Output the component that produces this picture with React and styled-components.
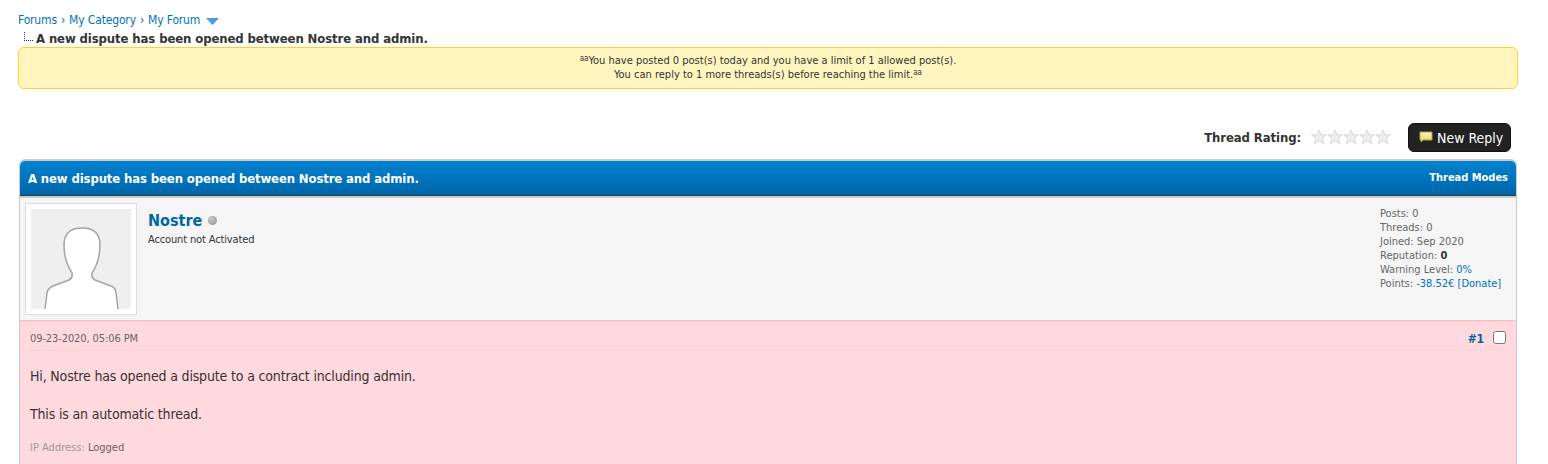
import React from "react";
import styled, { createGlobalStyle } from "styled-components";

const GlobalStyle = createGlobalStyle`
  html, body {
    margin: 0;
    height: 464px;
    overflow: hidden;
    background: #fff;
    font-family: "DejaVu Sans", sans-serif;
    font-stretch: condensed;
    color: #333;
  }
`;

const Page = styled.div`
  padding: 13px 30px 0 18px;
`;

const Breadcrumb = styled.div`
  display: flex;
  align-items: center;
  height: 14px;
  font-size: 12px;
  letter-spacing: -0.15px;
  color: #0f5c9e;
  gap: 4px;
  a {
    color: #0072bc;
  }
  svg {
    margin-left: 2px;
    margin-top: 2px;
  }
`;

const ThreadTitle = styled.div`
  display: flex;
  align-items: flex-end;
  height: 17px;
  margin-top: 2px;
  padding-left: 6px;
  font-size: 13px;
  font-weight: 700;
  letter-spacing: -0.11px;
  color: #333;
  gap: 3px;
  line-height: 14px;
`;

const Tree = styled.span`
  width: 9px;
  height: 9px;
  margin-bottom: 5px;
  border-left: 1px dotted #333;
  border-bottom: 1px dotted #333;
  box-sizing: border-box;
`;

const Notice = styled.div`
  height: 42px;
  margin-top: 1px;
  box-sizing: border-box;
  border: 1px solid #ffd324;
  border-radius: 6px;
  background: #fff6bf;
  padding-top: 6px;
  text-align: center;
  font-size: 11px;
  line-height: 14px;
  color: #333;
`;

const Ordinal = styled.span`
  font-size: 8px;
  line-height: 1;
  vertical-align: 3px;
`;

const RatingRow = styled.div`
  display: flex;
  justify-content: flex-end;
  align-items: center;
  height: 30px;
  margin-top: 33px;
  padding-right: 7px;
`;

const RatingLabel = styled.span`
  font-size: 13px;
  font-weight: 700;
  letter-spacing: -0.1px;
  margin-right: 10px;
`;

const Stars = styled.div`
  display: flex;
  margin-right: 17px;
  svg {
    display: block;
  }
`;

const ReplyButton = styled.button`
  display: flex;
  align-items: center;
  gap: 4px;
  height: 29px;
  width: 103px;
  box-sizing: border-box;
  padding: 2px 0 0 10px;
  border: 1px solid #111;
  border-radius: 6px;
  background: #222;
  color: #fff;
  font: condensed 14px "DejaVu Sans", sans-serif;
  svg {
    margin-top: -3px;
  }
`;

const Thread = styled.div`
  margin: 7px 1px 0;
  border: 1px solid #ccc;
  border-top-width: 2px;
  border-bottom: 0;
  border-radius: 6px 6px 0 0;
`;

const ThreadHead = styled.div`
  display: flex;
  justify-content: space-between;
  height: 35px;
  box-sizing: border-box;
  padding: 10px 8px 0 8px;
  border-radius: 5px 5px 0 0;
  border-bottom: 1px solid #263c30;
  background: linear-gradient(#0082d0, #0066aa);
  color: #fff;
  font-weight: 700;
  font-size: 13px;
  letter-spacing: -0.13px;
  line-height: 16px;
`;

const HeadLink = styled.span`
  font-size: 11px;
  letter-spacing: -0.02px;
  line-height: 13px;
`;

const AuthorRow = styled.div`
  display: flex;
  height: 124px;
  box-sizing: border-box;
  padding: 5px 16px 0 5px;
  background: #f5f5f5;
  border-top: 2px solid #ccc;
`;

const AvatarFrame = styled.div`
  width: 112px;
  height: 112px;
  box-sizing: border-box;
  padding: 5px;
  background: #fff;
  border: 1px solid #ddd;
  margin-right: 11px;
  svg {
    display: block;
  }
`;

const AuthorInfo = styled.div`
  flex: 1;
  padding-top: 7px;
`;

const NameLine = styled.div`
  display: flex;
  align-items: center;
  gap: 6px;
  height: 20px;
  font-size: 16px;
  font-weight: 700;
  color: #0066a2;
`;

const StatusDot = styled.span`
  width: 9px;
  height: 9px;
  border-radius: 50%;
  background: radial-gradient(circle at 40% 35%, #c8c8c8, #8f8f8f);
`;

const UserTitle = styled.div`
  font-size: 11px;
  letter-spacing: -0.14px;
  line-height: 14px;
  margin-top: 3px;
`;

const Stats = styled.div`
  width: 120px;
  padding-top: 4px;
  font-size: 11px;
  line-height: 14px;
  color: #666;
  white-space: nowrap;
  a {
    color: #0072bc;
  }
  b {
    color: #333;
  }
`;

const Post = styled.div`
  height: 144px;
  box-sizing: border-box;
  background: #ffd9de;
  border-top: 1px solid #ffb6bd;
  padding: 0 10px;
`;

const PostHead = styled.div`
  display: flex;
  justify-content: space-between;
  align-items: center;
  padding-top: 6px;
  height: 23px;
  border-bottom: 1px dotted #f0cdd1;
  font-size: 11px;
  letter-spacing: -0.1px;
  color: #666;
`;

const PostMeta = styled.div`
  display: flex;
  align-items: center;
  gap: 9px;
  a {
    color: #0066a2;
    font-weight: 700;
    font-size: 12px;
  }
  input {
    width: 13px;
    height: 13px;
    margin: 0 0 2px;
  }
`;

const PostBody = styled.div`
  padding-top: 16px;
  font-size: 14px;
  letter-spacing: -0.16px;
  line-height: 19px;
  color: #333;
  p {
    margin: 0 0 19px;
  }
`;

const PostFoot = styled.div`
  margin-top: -2px;
  font-size: 11px;
  color: #999;
  span {
    color: #666;
  }
`;

const Star = () => (
  <svg width="16" height="16" viewBox="0 0 16 16">
    <path
      d="M8 .8l2.1 5h5.3l-4.2 3.4 1.5 5.6L8 11.8l-4.7 3 1.5-5.6L.6 5.8h5.3z"
      fill="#ededed"
      stroke="#d8d8d8"
    />
  </svg>
);

const Silhouette = () => (
  <svg width="100" height="100" viewBox="0 0 100 100">
    <rect width="100" height="100" fill="#efefef" />
    <path
      d="M14 100L16 84Q17 79 22 77L38 71Q42 69 41 64Q33 52 33 36Q33 19 51 19Q69 19 69 36Q69 52 61 64Q60 69 64 71L80 77Q85 79 85 84L87 100"
      fill="#fff"
      stroke="#a4a4a4"
      strokeWidth="1.5"
    />
  </svg>
);

const ReplyIcon = () => (
  <svg width="14" height="12" viewBox="0 0 14 12">
    <defs>
      <linearGradient id="bubble" x1="0" y1="0" x2="0" y2="1">
        <stop offset="0" stopColor="#fdf6c4" />
        <stop offset="1" stopColor="#e6cf62" />
      </linearGradient>
    </defs>
    <path d="M1 1h12v8H4l-2 2V9H1z" fill="url(#bubble)" stroke="#b59a3c" />
  </svg>
);

const App = () => (
  <Page>
    <GlobalStyle />
    <Breadcrumb>
      <a>Forums</a>›<a>My Category</a>›<a>My Forum</a>
      <svg width="13" height="7" viewBox="0 0 13 7">
        <path d="M0 0h13L6.5 7z" fill="#4a9ce0" />
      </svg>
    </Breadcrumb>
    <ThreadTitle>
      <Tree />A new dispute has been opened between Nostre and admin.
    </ThreadTitle>
    <Notice>
      <Ordinal>aa</Ordinal>You have posted 0 post(s) today and you have a limit of 1 allowed post(s).
      <br />
      You can reply to 1 more threads(s) before reaching the limit.<Ordinal>aa</Ordinal>
    </Notice>
    <RatingRow>
      <RatingLabel>Thread Rating:</RatingLabel>
      <Stars>
        {[0, 1, 2, 3, 4].map((i) => (
          <Star key={i} />
        ))}
      </Stars>
      <ReplyButton>
        <ReplyIcon />
        New Reply
      </ReplyButton>
    </RatingRow>
    <Thread>
      <ThreadHead>
        A new dispute has been opened between Nostre and admin.
        <HeadLink>Thread Modes</HeadLink>
      </ThreadHead>
      <AuthorRow>
        <AvatarFrame>
          <Silhouette />
        </AvatarFrame>
        <AuthorInfo>
          <NameLine>
            Nostre <StatusDot />
          </NameLine>
          <UserTitle>Account not Activated</UserTitle>
        </AuthorInfo>
        <Stats>
          Posts: 0<br />
          Threads: 0<br />
          Joined: Sep 2020<br />
          Reputation: <b>0</b>
          <br />
          Warning Level: <a>0%</a>
          <br />
          Points: <a>-38.52€</a> <a>[Donate]</a>
        </Stats>
      </AuthorRow>
      <Post>
        <PostHead>
          09-23-2020, 05:06 PM
          <PostMeta>
            <a>#1</a>
            <input type="checkbox" />
          </PostMeta>
        </PostHead>
        <PostBody>
          <p>Hi, Nostre has opened a dispute to a contract including admin.</p>
          <p>This is an automatic thread.</p>
        </PostBody>
        <PostFoot>
          IP Address: <span>Logged</span>
        </PostFoot>
      </Post>
    </Thread>
  </Page>
);

export default App;
